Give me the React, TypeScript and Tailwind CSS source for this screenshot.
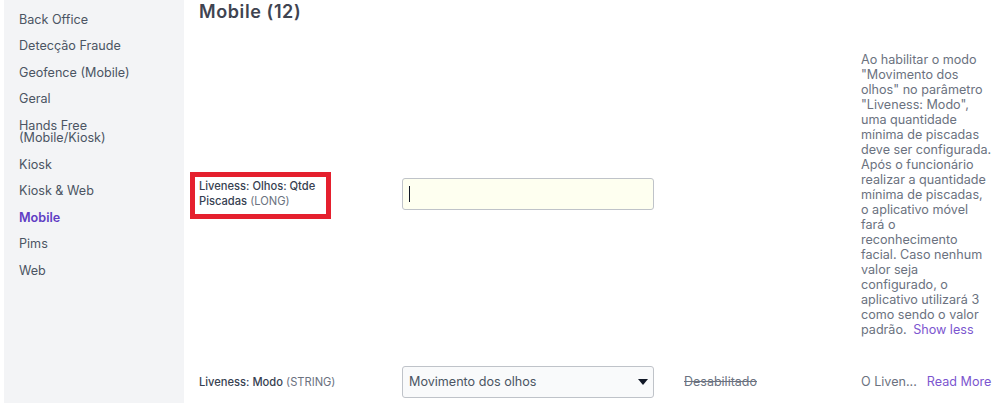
import React from 'react'

const navItems = [
  'Back Office',
  'Detecção Fraude',
  'Geofence (Mobile)',
  'Geral',
  'Hands Free (Mobile/Kiosk)',
  'Kiosk',
  'Kiosk & Web',
  'Mobile',
  'Pims',
  'Web',
]

const font = "font-['Inter','Noto_Sans',sans-serif]"

const Sidebar: React.FC = () => (
  <aside className="w-[180px] shrink-0 self-stretch bg-[#f3f4f6] pt-[7px] pl-[15px] pr-[20px]">
    {navItems.map((item) => (
      <div
        key={item}
        className={
          item === 'Mobile'
            ? 'py-[7px] text-[12.6px] leading-[12.45px] font-semibold text-[#5f3dc4]'
            : 'py-[7px] text-[12.6px] leading-[12.45px] text-[#4b5563]'
        }
      >
        {item}
      </div>
    ))}
  </aside>
)

const App: React.FC = () => {
  return (
    <div className={`flex h-[403px] w-[1000px] overflow-hidden bg-white pl-[4px] ${font}`}>
      <Sidebar />
      <main className="min-w-0 flex-1 pl-[15px]">
        <h1 className="h-[37px] pt-[1px] text-[18px] leading-[22px] font-semibold tracking-[0.6px] text-[#3f4451]">Mobile (12)</h1>

        <div className="grid grid-cols-[203px_282px_177px_1fr] items-center py-[15px]">
          <div className="relative mb-[2px] text-[11.15px] leading-[15px]">
            <div className="absolute top-[-7px] left-[-9px] h-[47px] w-[141px] border-[5px] border-[#e5202e]" />
            <span className="font-medium text-[#374151]">Liveness: Olhos: Qtde<br />Piscadas</span>
            <span className="text-[#6b7280]">&nbsp;(LONG)</span>
          </div>
          <div className="mb-[2px] flex h-[32px] w-[252px] items-center rounded-[3px] border border-[#bfc3c9] bg-[#fefff0] pl-[6px]">
            <div className="h-[16px] w-px bg-[#111827]" />
          </div>
          <div />
          <div className="w-[132px] text-[12.6px] leading-[15px] text-[#6b7280]">
            Ao habilitar o modo "Movimento dos olhos" no parâmetro "Liveness: Modo", uma quantidade mínima de piscadas deve ser configurada. Após o funcionário realizar a quantidade mínima de piscadas, o aplicativo móvel fará o reconhecimento facial. Caso nenhum valor seja configurado, o aplicativo utilizará 3 como sendo o valor padrão.{' '}
            <span className="ml-[3px] text-[#7c56cf]">Show less</span>
          </div>
        </div>

        <div className="grid grid-cols-[203px_282px_177px_1fr] items-center pt-[14px]">
          <div className="text-[11.15px] leading-[15px]">
            <span className="font-medium text-[#374151]">Liveness: Modo</span>
            <span className="text-[#6b7280]">&nbsp;(STRING)</span>
          </div>
          <div className="flex h-[32px] w-[252px] items-center justify-between rounded-[3px] border border-[#bfc3c9] bg-[#f9fafb] pr-[4px] pl-[6px] text-[12.6px] text-[#4b5563]">
            <span>Movimento dos olhos</span>
            <svg width="10" height="6" viewBox="0 0 10 6" className="mr-[1px]">
              <path d="M0 0h10L5 6z" fill="#111827" />
            </svg>
          </div>
          <div className="text-[12.5px] text-[#6b7280] line-through">Desabilitado</div>
          <div className="text-[12.6px] whitespace-nowrap text-[#6b7280]">
            O Liven...<span className="ml-[10px] text-[#7c56cf]">Read More</span>
          </div>
        </div>
      </main>
    </div>
  )
}

export default App
